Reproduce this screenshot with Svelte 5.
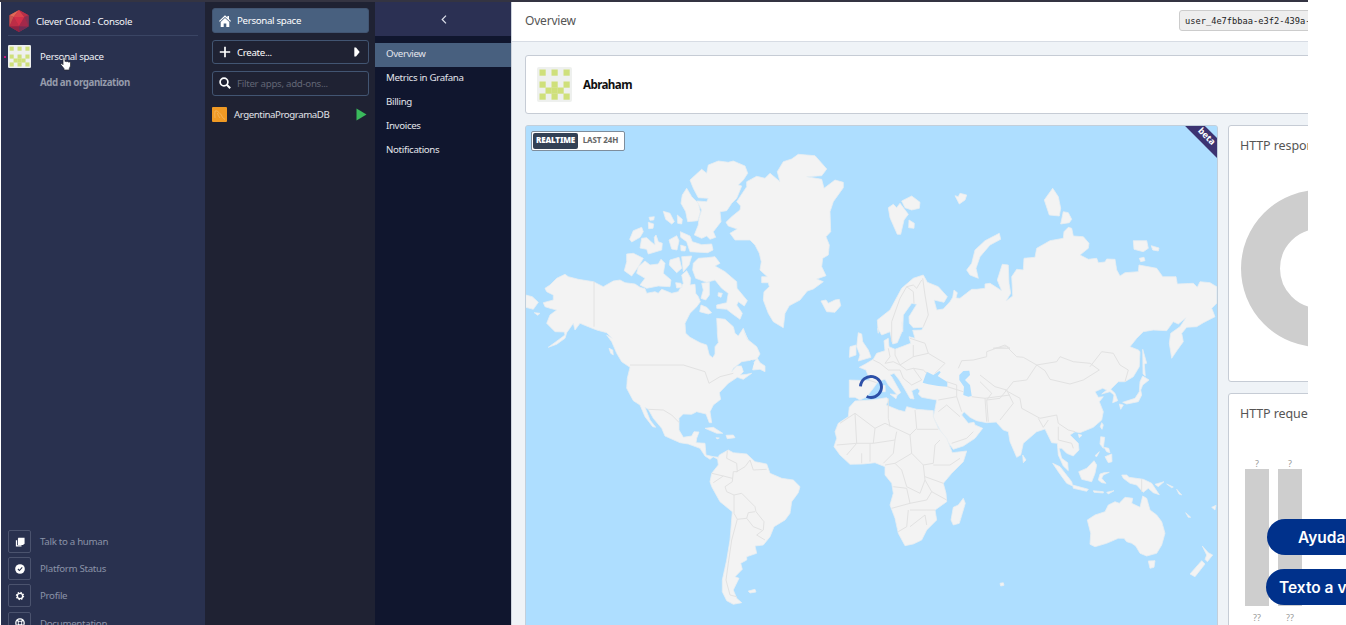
<script>
  // Origins of the map tiles; tile coordinates are in thirds of a pixel.
  const tiles = {
    A: [525, 150], B: [720, 145], C: [940, 170],
    D: [600, 330], E: [810, 320], F: [980, 340]
  };
  function trace(src) {
    let tile = tiles.A;
    const out = [];
    for (const token of src.trim().split(/\s+/)) {
      if (tiles[token]) { tile = tiles[token]; continue; }
      const [x, y] = token.split(',').map(Number);
      out.push((tile[0] + x / 3).toFixed(1) + ',' + (tile[1] + y / 3).toFixed(1));
    }
    return out.join(' ');
  }

  const land = [
    // North America
    `A 60,415 75,405 95,385 120,373 130,380 160,388 205,395 235,410 265,393 285,390 300,398 330,402 345,412 360,416 365,430 390,425 400,430 410,418 440,430 460,425 475,400 470,375 485,362 497,385 495,405 510,403 512,430 520,440 526,455 515,470 495,490 480,520 482,550 D 270,22 300,38 320,45 328,75 338,83 345,72 345,50 355,38 352,10 A 577,540 575,505 600,508 625,530 630,550 640,558 655,535 668,570 D 432,5 445,30 470,50 480,72 470,88 425,95 400,115 395,125 410,108 425,108 430,125 420,135 440,133 455,130 430,148 412,142 385,160 358,188 362,208 340,225 330,245 335,278 328,278 318,252 290,245 275,253 250,252 237,265 237,300 250,322 275,318 282,305 297,306 290,325 288,338 315,340 318,375 340,380 357,382 353,388 340,380 330,388 315,378 300,355 265,342 240,338 195,318 185,295 160,265 145,238 135,232 150,270 167,292 158,290 135,260 120,225 100,212 80,175 82,145 90,112 65,95 50,70 35,35 20,15 A 262,565 245,548 215,540 190,530 165,520 150,540 145,520 125,548 120,565 95,583 70,592 100,570 120,555 118,546 90,545 65,520 75,495 95,480 75,475 60,470 55,458 85,450 85,435 65,425`,
    // Arctic archipelago
    `A 495,90 530,58 545,70 550,45 580,33 610,37 625,33 660,48 668,70 655,90 640,105 650,108 635,145 620,160 605,182 585,185 588,215 565,245 572,262 555,268 545,258 530,265 508,255 520,225 522,205 530,180 515,153 545,155 550,145 520,143 505,115`,
    `A 485,115 500,140 520,160 526,185 518,212 488,215 482,185 468,160 472,135`,
    `A 415,184 435,190 448,215 440,222 422,208`, `A 457,195 472,208 470,222 458,220`,
    `A 372,202 388,200 386,210 375,211`, `A 370,217 386,222 384,235 371,236`,
    `A 325,242 350,232 355,245 345,262 320,276 314,268`,
    `A 350,265 365,263 378,275 390,285 388,262 393,255 400,275 412,280 410,300 370,312 365,298 345,294`,
    `A 432,270 455,257 462,272 456,300 440,297`, `A 466,245 495,258 502,275 530,284 560,282 564,300 548,308 495,305 485,275 467,262`,
    `A 467,285 483,290 480,303 468,302`, `A 305,312 325,310 355,325 340,350 320,378 298,362 305,335`,
    `A 340,350 360,333 375,345 400,342 408,328 420,340 415,370 438,390 435,410 400,408 365,415 345,405 360,385 335,370`,
    `A 435,330 462,322 470,355 455,368 433,345`, `A 470,320 500,318 492,345 475,365`,
    `A 505,340 520,325 545,323 570,320 585,340 570,348 600,365 635,395 636,415 667,452 658,468 640,455 635,465 652,490 645,508 620,490 605,478 575,475 575,465 605,458 610,430 590,415 570,390 545,397 512,385 503,360`,
    `A 530,400 553,397 553,435 542,450 528,445 535,420`, `A 528,465 545,472 560,488 550,492 524,485`,
    `A 452,398 468,400 472,412 455,414`, `A 580,428 592,430 588,442 579,438`,
    `A 2,435 22,440 40,457 25,478 2,472`, `A 28,488 45,490 38,496`,
    // Greenland, Iceland, Svalbard
    `B 18,232 35,215 60,195 62,183 50,170 80,125 80,110 110,94 135,100 150,85 180,110 172,80 190,50 215,42 235,28 285,32 305,55 320,72 305,92 260,95 305,103 312,130 345,105 370,112 370,128 340,170 330,200 332,260 318,275 328,300 325,330 308,340 305,365 318,392 290,402 310,410 280,432 262,438 240,465 208,482 195,505 190,548 160,530 145,505 130,465 132,440 148,425 145,413 125,413 125,395 142,395 120,375 124,350 118,325 105,300 90,285 45,285 30,265 52,252 25,243`,
    `B 303,468 318,465 325,475 345,465 358,463 362,482 345,502 320,500`,
    `B 505,188 520,178 530,188 540,175 565,208 552,225 542,268 532,268 510,218`, `B 545,168 575,153 600,172 598,190 575,195 555,188`, `B 567,225 583,235 582,250 566,248`,
    `C 45,77 55,80 60,70 80,75 75,90 58,102`,
    `C 338,55 355,80 362,115 358,138 328,135 313,90`, `C 370,125 385,128 395,148 388,158 362,162`,
    `C 178,190 182,208 150,225 120,260 108,295 115,325 90,315 80,300 95,280 105,240 135,212`,
    `C 580,212 620,212 625,235 610,245 582,238`, `C 634,227 657,234 655,243 638,240`, `C 598,265 612,262 615,272 602,275`,
    // Eurasia
    `E 118,180 118,232 135,232 150,240 170,230 190,205 205,184 225,178 235,195 262,225 272,218 245,170 240,165 252,160 268,180 284,207 300,235 312,237 305,212 322,205 330,212 325,222 335,232 380,240 374,272 370,292 395,340 420,375 430,388 460,378 495,355 518,325 495,315 492,307 475,310 455,285 462,275 480,292 500,302 530,308 560,306 F 50,248 70,270 85,275 90,305 110,352 122,345 130,310 170,275 195,267 215,308 232,310 235,345 250,378 265,392 263,368 245,355 237,325 245,325 260,340 280,348 297,330 295,310 270,285 285,275 300,278 340,262 365,240 370,215 358,185 370,170 355,172 345,155 368,145 380,150 365,162 390,155 402,165 398,188 413,182 405,160 392,148 415,125 435,125 460,110 478,80 480,35 475,30 450,20 C 570,530 590,505 610,485 640,480 680,482 700,455 715,462 738,443 720,470 692,490 688,520 695,565 712,540 730,515 725,490 740,472 770,470 790,458 825,440 815,415 830,400 830,350 810,338 780,335 772,352 760,340 712,342 708,320 668,320 650,295 597,285 595,305 555,308 540,318 530,300 525,268 500,267 495,276 475,278 470,265 445,268 420,255 445,235 447,220 430,200 400,198 395,175 385,172 372,185 370,205 330,212 290,235 285,262 252,265 250,300 230,298 215,320 218,378 198,393 212,370 207,340 205,285 187,283 172,330 185,362 150,340 135,342 135,355 110,358 95,358 60,385 48,384 52,368 42,360 38,382 B 690,470 670,492 650,495 642,465 672,472 682,455 655,425 622,412 610,390 580,400 545,430 510,495 472,525 475,565 E 203,25 215,45 240,35 248,72 262,68 278,30 276,5 B 548,560 550,510 575,475 590,478 567,515 568,535 580,548 610,547 605,555 578,556 585,580 567,575 E 297,50 302,70 255,88 237,80 235,55 222,62 225,92 200,100 190,118 165,133 148,142 168,150 180,182`,
    // Africa and Madagascar
    `E 135,243 185,240 230,233 236,240 228,255 265,270 285,275 290,260 320,268 370,272 370,290 385,325 410,355 427,398 470,393 460,425 425,460 400,490 408,520 410,545 375,570 380,600 350,630 335,660 310,672 285,677 265,640 255,595 240,555 250,520 245,490 225,465 225,440 195,428 160,432 120,433 90,405 72,380 80,355 75,335 85,310 115,290 118,262`,
    `E 460,535 466,550 448,610 430,615 423,600 430,562 445,555`,
    // British Isles
    `E 145,38 155,42 158,65 175,90 183,112 145,123 150,105 140,80`, `E 120,80 138,75 138,105 118,112`,
    `E 240,222 262,224 258,236`, `E 217,198 225,196 226,215 218,215`,
    // South America and the Caribbean
    `D 353,388 358,375 385,360 400,368 440,372 465,395 500,402 510,430 545,445 580,450 600,470 595,488 575,515 570,550 555,570 522,590 510,620 490,645 465,648 470,670 440,680 440,690 422,700 427,718 405,740 417,745 400,780 410,805 425,818 400,823 380,812 367,785 367,750 380,690 390,630 397,545 360,515 335,470 330,455 335,430 355,405`,
    `D 315,295 340,292 368,310 350,310`, `D 378,316 400,315 405,323 382,326`, `D 348,323 358,324 352,327`, `D 460,100 472,85 480,98 495,108 495,125 480,118 458,120`, `D 445,783 465,778 468,786 450,789`, `D 27,55 38,60 40,75 32,70`,
    // Australia and the Pacific
    `F 322,540 345,525 375,515 385,495 405,485 418,490 435,472 458,475 455,490 480,502 488,468 500,475 510,510 530,525 545,545 555,580 545,615 530,640 500,648 480,640 467,618 455,610 440,605 432,595 415,595 380,610 345,620 330,613 332,580`,
    `F 505,663 525,662 522,682 510,685`, `F 218,370 240,380 275,425 278,438 260,430 235,395`, `F 278,435 325,448 320,454 280,445`,
    `F 296,395 320,385 342,362 350,375 345,400 335,425 305,418`, `F 360,402 372,398 388,397 370,405 365,415 378,430 365,428 355,420`,
    `F 425,405 440,405 447,412 490,418 515,430 538,464 520,458 505,445 490,457 470,435 450,430 430,415`, `F 525,433 552,425 535,440`, `F 560,432 580,441 575,443`, `F 590,448 605,465 597,462`, `F 617,518 632,532 625,532`, `F 695,502 708,496 705,510`,
    `F 362,290 374,292 370,325 360,312`, `F 375,350 395,342 396,365 385,368`, `F 345,347 358,335 350,350`, `F 372,322 386,325 390,338 380,335`,
    `F 488,108 507,120 488,135 482,150 485,165 475,185 440,192 428,187 465,175 478,155 480,125`, `F 418,192 430,195 422,208`, `F 488,28 500,70 493,72 496,108 489,102`,
    `F 365,248 370,255 366,268 361,260`, `F 128,345 138,360 130,368`, `F 295,282 306,286 298,293`, `F 667,618 685,638 698,645 682,665 675,658 680,645`, `F 665,662 675,672 645,710 630,702`, `F 60,730 70,728 72,736 62,738`, `F 340,452 370,455 370,459 342,457`, `F 380,457 402,452 385,462`
  ].map(trace);

  const water = [
    `E 338,188 350,155 370,165 388,153 392,157 383,168 412,186 412,200 385,198 355,193`,
    `E 448,165 460,153 478,152 480,165 465,180 480,195 485,228 475,230 460,225 462,200 448,180`,
    `D 425,108 455,90 462,100 455,120 435,128`
  ].map(trace);

  const borders = [
    `A 207,395 207,530`, `D 90,105 250,105 315,125 327,160 360,140 400,130`, `D 145,238 190,240 215,255 238,278`,
    `D 382,362 380,385 410,400 412,425 400,425 397,455 375,470 380,485 402,495 425,490 465,530 468,545 492,575 490,600 470,615 495,630`, `D 402,495 402,550 412,568 440,565 445,548 465,545`, `D 440,565 460,590 485,600`, `D 412,568 395,630 385,700 378,750 390,795 410,800`, `D 410,425 435,410 450,390 460,420 500,418`, `D 335,430 370,438 340,458`, `D 370,438 397,445`,
    `B 515,590 515,530 540,460 560,425 580,420 590,430 605,405`, `B 560,425 580,440 582,475`, `B 608,400 615,450 625,510 610,545`,
    `E 445,145 455,122 490,120 530,110 530,95 585,75 600,85 F 40,25 80,20 110,50 130,52 170,75 140,120 100,125 80,150 45,140 0,105`, `F 170,75 230,65 240,50 280,65 330,70 358,90 310,120 270,132 210,118 195,92 170,75`, `F 330,80 365,35 400,40 420,75 445,90 435,125`, `F 75,150 120,175 125,205 180,235 230,225 235,250 265,270 285,275`, `F 20,180 60,175 80,150 100,190 60,240`, `F 20,180 25,245`, `F 0,125 35,160 20,180`, `F 175,235 190,262 205,240`, `F 235,260 235,300 275,310 280,325`, `F 485,418 485,455`,
    `E 235,85 240,110 225,130 250,125 270,135 255,105 255,88`, `E 310,75 310,110 270,135 290,150 310,145 335,180 305,195 280,175 270,150 235,150 210,130 190,120`, `E 300,55 345,70 355,100 310,110`, `E 355,100 405,130 375,160`, `E 310,145 340,150 350,160`, `E 175,180 200,188`, `E 410,185 440,195 440,230 385,240`, `E 440,230 455,275`, `E 385,275 410,255 450,290`, `E 425,370 470,355 490,335`, `E 412,200 460,215`, `E 485,230 525,235 530,305`, `E 525,235 600,225`,
    `E 135,280 195,325 225,310 300,345 320,325 315,270`, `E 235,235 235,295 240,320`, `E 320,328 385,328`, `E 90,310 135,280 140,370 80,375`, `E 195,325 190,370 140,370`, `E 140,370 110,405`, `E 180,370 180,425`, `E 155,400 155,430`, `E 190,370 255,360 260,335`, `E 255,360 250,400 220,430`, `E 300,345 305,400 255,430 225,435`, `E 305,400 340,435 370,430 375,375 390,360`, `E 340,435 345,480 330,520 290,500 275,450 255,430`, `E 370,435 420,435 450,415`, `E 345,470 400,490`, `E 250,500 290,505 300,550 245,565`, `E 300,550 350,540 365,515`, `E 295,570 290,620 265,635`, `E 300,570 350,570 375,570`, `E 300,620 345,585 350,615`, `E 345,480 365,515 410,540`
  ].map(trace);

  const avatar = [[0,0],[2,0],[4,0],[0,2],[2,2],[4,2],[1,3],[2,3],[3,3],[0,4],[2,4],[4,4]];
  const help = [
    { label: 'Talk to a human', icon: 'chat' },
    { label: 'Platform Status', icon: 'check' },
    { label: 'Profile', icon: 'gear' },
    { label: 'Documentation', icon: 'ring' }
  ];
  const menu = ['Overview', 'Metrics in Grafana', 'Billing', 'Invoices', 'Notifications'];
</script>

{#snippet pixels(size)}
  <svg class="pixels" width={size} height={size} viewBox="0 0 35 35">
    <rect width="35" height="35" rx="2" fill="#eef0ee" />
    {#each avatar as [x, y]}
      <rect x={2.5 + x * 6} y={2.5 + y * 6} width="6.2" height="6.2" fill="#cfe07a" />
    {/each}
  </svg>
{/snippet}

<div class="page">
  <div class="console">
    <aside class="orgs">
      <header class="brand">
        <svg width="20" height="22" viewBox="0 0 20 22">
          <path d="M10 0 19.5 5.2v11.2L10 22 .5 16.4V5.2z" fill="#ad3047" />
          <path d="M10 0 .5 5.2 4.6 7z" fill="#e06a55" /><path d="M10 0 4.6 7h10.8z" fill="#d9434c" />
          <path d="M10 0l9.5 5.2-4.1 1.8z" fill="#b72f48" /><path d="M.5 5.2 4.6 7 .5 16.4z" fill="#c8544f" />
          <path d="M4.6 7h10.8L10 16.2z" fill="#d22f49" /><path d="M.5 16.4 4.6 7 10 16.2z" fill="#bd2d46" />
          <path d="M19.5 16.4 15.4 7 10 16.2z" fill="#a3284a" /><path d="M19.5 5.2v11.2L15.4 7z" fill="#873052" />
          <path d="M.5 16.4 10 16.2V22z" fill="#8f2243" /><path d="M19.5 16.4 10 16.2V22z" fill="#702b54" />
        </svg>
        <span>Clever Cloud - Console</span>
      </header>
      <div class="org">
        <i class="dot"></i>
        {@render pixels(23)}
        <span>Personal space</span>
        <svg class="hand" width="12" height="15" viewBox="0 0 12 15">
          <path d="M3 1.5q1-1 2 0v4q1-.8 1.7.2 1-.6 1.7.4 1.3-.6 2.100.5V10l-1.200 2.500V14H4v-1.400L.8 8.600q0-1.600 1.200-1L3 8.700z" fill="#fff" stroke="#25262f" stroke-width=".7" />
        </svg>
      </div>
      <div class="add">Add an organization</div>
      <nav class="help">
        {#each help as item}
          <div class="help-row">
            <span class="box">
              <svg width="10" height="10" viewBox="0 0 12 12">
                {#if item.icon === 'chat'}
                  <path d="M4 1h7.5v7L9.500 9.500H3.500V2z" fill="#fff" /><path d="M1.800 4v6.500h6" fill="none" stroke="#fff" stroke-width="1.500" />
                {:else if item.icon === 'check'}
                  <circle cx="6" cy="6" r="5.8" fill="#fff" /><path d="m3.500 6 1.800 1.800L8.700 4" fill="none" stroke="#29314f" stroke-width="1.300" />
                {:else if item.icon === 'gear'}
                  <circle cx="6" cy="6" r="4.200" fill="none" stroke="#fff" stroke-width="1.600" stroke-dasharray="1.650" /><circle cx="6" cy="6" r="3.200" fill="none" stroke="#fff" stroke-width="1.600" />
                {:else}
                  <circle cx="6" cy="6" r="5" fill="none" stroke="#fff" stroke-width="1.500" /><circle cx="6" cy="6" r="2.200" fill="none" stroke="#fff" /><path d="m2.500 2.500 2 2m5-2-2 2m-5 5 2-2m5 2-2-2" stroke="#fff" stroke-width="1.800" />
                {/if}
              </svg>
            </span>
            <span>{item.label}</span>
          </div>
        {/each}
      </nav>
    </aside>

    <aside class="apps">
      <div class="app-btn on">
        <svg width="12" height="12" viewBox="0 0 12 12"><path d="M6 .3 0 6l.8.8L6 2l5.200 4.800.8-.8-2-1.900V1H8.400v1.600z" fill="#fff" /><path d="M6 3 1.700 7v5h3V8.500h2.600V12h3V7z" fill="#fff" /></svg>
        <span>Personal space</span>
      </div>
      <div class="app-btn create">
        <svg width="12" height="12" viewBox="0 0 12 12"><path d="M6 .8v10.400M.8 6h10.400" stroke="#fff" stroke-width="1.700" /></svg>
        <span>Create...</span>
        <svg class="end" width="6" height="10" viewBox="0 0 6 10"><path d="M.3.5H2l3.700 4.500L2 9.500H.3z" fill="#fff" /></svg>
      </div>
      <div class="app-btn filter">
        <svg width="12" height="12" viewBox="0 0 12 12"><circle cx="5" cy="5" r="3.900" fill="none" stroke="#fff" stroke-width="1.700" /><path d="m7.800 7.800 3.400 3.400" stroke="#fff" stroke-width="2" /></svg>
        <span>Filter apps, add-ons...</span>
      </div>
      <div class="app">
        <svg width="15" height="15" viewBox="0 0 15 15"><rect width="15" height="15" rx="1" fill="#f09a24" /><path d="M3 11Q2.500 7 3 4q2-1 4 1.500 3 2.500 3.500 5l2.500 2M5.500 6q.5 3 2.500 5" fill="none" stroke="#f7bb6c" stroke-width=".7" /></svg>
        <span>ArgentinaProgramaDB</span>
        <svg class="end" width="11" height="13" viewBox="0 0 11 13"><path d="M.5.500 10.500 6.500.5 12.500z" fill="#3aba5c" /></svg>
      </div>
    </aside>

    <aside class="menu">
      <div class="back"><svg width="6" height="9" viewBox="0 0 6 9"><path d="M5 .7 1.200 4.500 5 8.300" fill="none" stroke="#dfe2ec" stroke-width="1.200" /></svg></div>
      {#each menu as item, i}
        <div class="menu-item" class:active={i === 0}><span>{item}</span></div>
      {/each}
    </aside>

    <main>
      <header class="top"><h1>Overview</h1><code>user_4e7fbbaa-e3f2-439a-</code></header>
      <section class="card user">{@render pixels(35)}<b>Abraham</b></section>
      <div class="panels">
        <section class="map">
          <svg class="world" width="691" height="500" viewBox="526 126 691 500">
            <rect x="526" y="126" width="691" height="500" fill="#aedeff" />
            <g class="terrain">
              <g class="land">{#each land as points}<polygon {points} />{/each}</g>
              <g fill="#aedeff">{#each water as points}<polygon {points} />{/each}</g>
              <g class="borders">{#each borders as points}<polyline {points} />{/each}</g>
            </g>
          </svg>
          <div class="switch"><b>REALTIME</b><span>LAST 24H</span></div>
          <div class="beta"><span>beta</span></div>
          <svg class="spinner" width="26" height="26" viewBox="0 0 26 26"><path d="M2.500 12.300A10.500 10.500 0 1 1 8.600 22.500" fill="none" stroke="#2d50a8" stroke-width="2.900" /></svg>
        </section>
        <div class="stats">
          <section class="card stat donut">
            <h2>HTTP responses</h2>
            <svg width="157" height="157" viewBox="0 0 157 157"><circle cx="78.500" cy="78.500" r="59" fill="none" stroke="#cecece" stroke-width="39" /></svg>
          </section>
          <section class="card stat chart">
            <h2>HTTP requests</h2>
            <div class="bars">
              {#each [0, 1] as bar (bar)}
                <div class="bar"><span>?</span><i></i><span class="foot">??</span></div>
              {/each}
            </div>
          </section>
        </div>
      </div>
    </main>
  </div>
  <button class="pill first">Ayuda</button>
  <button class="pill second">Texto a voz</button>
</div>

<style>
  .page { position: relative; width: 1346px; height: 625px; overflow: hidden; background: #fff; font-family: "Noto Sans", sans-serif; font-size: 9.7px; color: #fff; }
  .page *, .page { box-sizing: border-box; }
  svg { display: block; flex: none; }
  span, b, code { white-space: nowrap; }
  .console { display: flex; width: 1308px; height: 625px; overflow: hidden; border-top: 2px solid #343442; padding-left: 1px; }
  .orgs { display: flex; flex-direction: column; flex: none; width: 204px; background: #29314f; padding: 0 7px; }
  .brand { display: flex; flex: none; align-items: center; gap: 7px; height: 34px; padding: 5px 2px 0 1px; border-bottom: 1px solid #3a4564; color: #f5f6fa; letter-spacing: -.26px; }
  .org { position: relative; display: flex; flex: none; align-items: center; gap: 9px; height: 23px; margin-top: 9px; letter-spacing: -.34px; color: #eef0f5; }
  .dot { position: absolute; left: -4px; top: 11px; width: 2px; height: 2px; background: #c8157c; }
  .hand { position: absolute; left: 52px; top: 11px; }
  .add { flex: none; margin: 8px 0 0 32px; line-height: 14px; font-weight: 700; color: #959bab; letter-spacing: -.4px; }
  .help { display: flex; flex: none; flex-direction: column; gap: 4px; margin-top: 440px; color: #8b93a8; letter-spacing: -.29px; }
  .help-row { display: flex; align-items: center; gap: 9px; height: 23.2px; flex: none; }
  .box { display: flex; align-items: center; justify-content: center; width: 23px; height: 23px; border: 1px solid #4b536e; border-radius: 2px; }
  .apps { flex: none; width: 170px; background: #1f2233; padding: 6px 6px 0 7px; }
  .app-btn { display: flex; align-items: center; gap: 6px; height: 25px; margin-bottom: 7px; padding: 0 7px 0 6px; border: 1px solid #425572; border-radius: 3px; letter-spacing: -.31px; }
  .app-btn.on { background: #48607f; }
  .end { margin-left: auto; }
  .create { height: 24px; padding-right: 8px; }
  .filter { color: #626675; letter-spacing: -.28px; padding-bottom: 1px; }
  .app { display: flex; align-items: center; gap: 7px; height: 18px; margin-top: 9px; padding-right: 2px; letter-spacing: -.43px; color: #e1e3e9; }
  .menu { flex: none; width: 136px; background: #10162e; color: #e3e5ec; letter-spacing: -.33px; }
  .back { display: flex; align-items: center; justify-content: center; height: 34px; margin-bottom: 7px; padding-left: 2px; background: #2b3053; }
  .menu-item { display: flex; align-items: center; height: 23.9px; padding: 0 0 2px 11px; }
  .menu-item.active { background: #48607f; }
  main { flex: none; width: 980px; background: #eff3f7; color: #555; border-left: 1px solid #cdd3dc; }
  .top { display: flex; align-items: center; height: 40px; padding: 0 0 2px 13px; background: #fff; border-bottom: 1px solid #d7dce4; }
  h1, h2 { margin: 0; font-weight: 400; color: #555; }
  h1 { flex: none; width: 654px; font-size: 12px; letter-spacing: -.2px; }
  .top code { height: 21px; padding: 0 5px; border: 1px solid #ccc; border-radius: 3px; background: #eee; color: #222; font: 8.7px/20px "DejaVu Sans Mono", monospace; }
  .card { background: #fff; border: 1px solid #c6ccd5; border-radius: 3px; }
  .user { display: flex; align-items: center; gap: 11px; width: 940px; height: 59px; margin: 13px 0 0 13px; padding-left: 11px; color: #111; font-size: 11.6px; letter-spacing: -.6px; }
  .user b { padding-bottom: 1px; }
  .panels { display: flex; gap: 10px; margin: 11px 0 0 13px; }
  .map { position: relative; flex: none; width: 693px; height: 510px; overflow: hidden; border: 1px solid #c2cfdb; border-radius: 3px; background: #aedeff; }
  .terrain { filter: blur(.45px); }
  .land { fill: #f3f3f3; stroke: #e9eef1; stroke-width: .8; stroke-linejoin: round; }
  .borders { fill: none; stroke: #e2e2e2; stroke-width: 1; stroke-linejoin: round; }
  .switch { position: absolute; left: 5px; top: 5px; display: flex; align-items: center; width: 94px; height: 20px; padding: 1px; border: 1px solid #7e8d9c; border-radius: 2px; background: #fff; color: #666; font-size: 8px; font-weight: 700; }
  .switch b { width: 45px; height: 16px; line-height: 14px; text-align: center; background: #334155; color: #fff; border-radius: 2px; letter-spacing: -.2px; }
  .switch span { flex: 1; height: 16px; line-height: 14px; text-align: center; letter-spacing: -.1px; }
  .beta { position: absolute; right: -24px; top: 4px; width: 70px; height: 14px; transform: rotate(45deg); background: #3c3371; color: #fff; font-size: 9px; font-weight: 700; line-height: 12px; text-align: center; }
  .spinner { position: absolute; left: 332px; top: 248px; }
  .stats { display: flex; flex-direction: column; gap: 11px; }
  .stat { width: 233px; height: 257px; padding: 11px 11px 0; }
  h2 { font-size: 12.5px; line-height: 18px; letter-spacing: -.1px; white-space: nowrap; }
  .donut svg { margin: 35px 0 0 1px; }
  .bars { display: flex; gap: 9px; width: 190px; margin: 35px 0 0 5px; }
  .bar { display: flex; flex-direction: column; align-items: center; width: 24px; color: #999; font-size: 9px; line-height: 11px; }
  .bar i { width: 24px; height: 137px; background: #cecece; }
  .foot { margin-top: 6px; }
  .pill { position: absolute; left: 1267px; top: 519px; width: 130px; height: 36px; padding: 0 0 0 31px; border: 0; border-radius: 18px; background: #00318b; color: #fff; font: 600 15.5px Inter, sans-serif; text-align: left; white-space: nowrap; }
  .second { left: 1266px; top: 569px; padding-left: 13px; }
</style>
